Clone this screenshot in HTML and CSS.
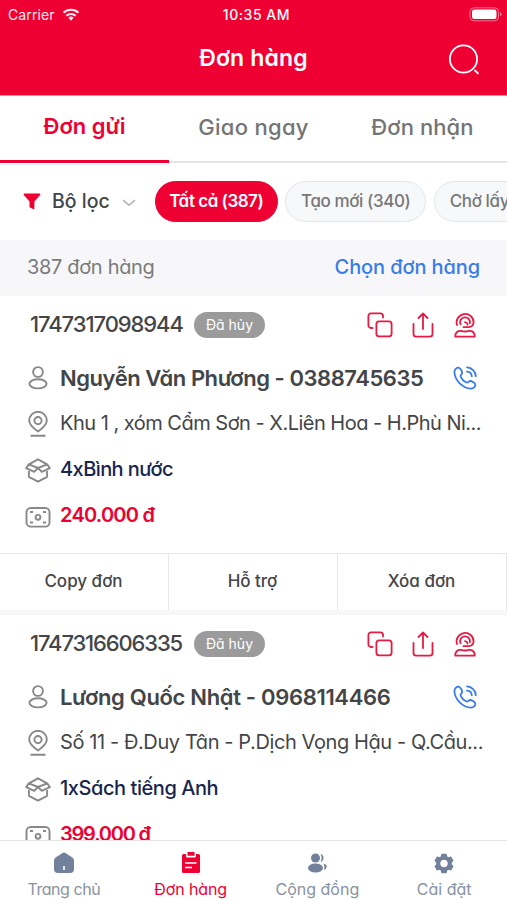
FILE: index.html
```html
<!DOCTYPE html>
<html lang="vi">
<head>
<meta charset="utf-8">
<title>Đơn hàng</title>
<link rel="stylesheet" href="styles.css">
</head>
<body>
<svg class="defs" width="0" height="0">
  <symbol id="copy" viewBox="0 0 26 26"><path d="M5.500 16H4a2.600 2.600 0 0 1-2.600-2.600V4A2.600 2.600 0 0 1 4 1.400h9.400A2.600 2.600 0 0 1 16 4v1.500"/><rect x="9.400" y="9.400" width="15.200" height="15" rx="2.600"/></symbol>
  <symbol id="share" viewBox="0 0 22 26"><path d="M1.500 12v10a2.600 2.600 0 0 0 2.600 2.600h13.800a2.600 2.600 0 0 0 2.600-2.600V12M11 17V1.500M6.500 6 11 1.500 15.500 6"/></symbol>
  <symbol id="agent" viewBox="0 0 22 26"><path d="M3 13A8.500 8.500 0 1 1 19.600 10.500Q19.200 14.800 14.500 15.200H9.500M6.600 12.300a4.900 4.900 0 1 1 9.200-1M11 10.200q2.200.3 2.600 2.300M1.200 24.600q0-5.400 4.800-5.800h1q4 1.400 8 0h1q4.800.4 4.800 5.800z"/></symbol>
  <symbol id="call" viewBox="0 0 24 24"><path d="M6 1.800C4 1 1.500 3.200 1.400 6c.3 8.300 8.300 16.400 16.600 16.600 2.800 0 5-2.400 4.200-4.400-.5-1.400-3.600-3.200-5-3.200-1.500 0-2.200 2-3.400 1.500-2.400-.9-5.200-3.700-6.200-6.200C7.200 9.100 9.200 8.300 9.200 6.900 9.200 5.400 7.500 2.400 6 1.800zM14 1.300c4.700.2 8.600 4.100 8.800 8.800M14 5.600c2.600.2 4.600 2.200 4.800 4.700"/></symbol>
  <symbol id="user" viewBox="0 0 26 26"><circle cx="13" cy="7" r="4.900"/><ellipse cx="13" cy="18.800" rx="8.600" ry="4.600"/></symbol>
  <symbol id="pin" viewBox="0 0 26 26"><path d="M13 20.500C10 18.500 4.200 14.500 4.200 9.600a8.800 8.800 0 0 1 17.600 0C21.800 14.500 16 18.500 13 20.500zM5.500 24.800h15"/><circle cx="13" cy="9.600" r="3.600"/></symbol>
  <symbol id="box" viewBox="0 0 26 26"><path d="M3.800 7.300 13 2.300l9.200 5 2.600 3.800-8 3.800L13 11l-3.800 3.900-8-3.800zM3.800 7.300 13 11l9.200-3.700M3.900 12.800v7L13 24.700l9.100-4.900v-7"/></symbol>
  <symbol id="cash" viewBox="0 0 26 26"><rect x="1.500" y="4" width="23" height="18.600" rx="4.200"/><circle cx="13" cy="13.300" r="2.400"/><path d="M5 8h3M18 8h3M5 18.500h3M18 18.500h3"/></symbol>
</svg>
<div class="app">
  <header class="header">
    <div class="status">
      <div class="carrier"><span>Carrier</span>
        <svg width="18" height="13" viewBox="0 0 18 13"><path class="wave" d="M1.500 4.700a11 11 0 0 1 15 0M4.300 7.700a7 7 0 0 1 9.400 0"/><path fill="#fff" d="M6.300 9.800a4 4 0 0 1 5.400 0L9 12.700z"/></svg>
      </div>
      <span class="time">10:35 AM</span>
      <svg class="battery" width="33" height="15" viewBox="0 0 33 15"><rect x="1" y=".8" width="28.500" height="13" rx="4" fill="none" stroke="#fff" stroke-opacity=".45"/><rect x="3" y="2.600" width="24.500" height="9.400" rx="2.300" fill="#fff"/><path d="M31 5v4.500q1.500-1 1.500-2.200T31 5" fill="#fff" opacity=".5"/></svg>
    </div>
    <div class="titlebar">
      <h1>Đơn hàng</h1>
      <svg class="search" width="32" height="32" viewBox="0 0 32 32"><circle cx="15.500" cy="15" r="13.600"/><path d="m27 26.500 3 2.800"/></svg>
    </div>
  </header>
  <nav class="tabs">
    <div class="tab active"><span class="t1">Đơn gửi</span></div>
    <div class="tab"><span class="t2">Giao ngay</span></div>
    <div class="tab"><span class="t3">Đơn nhận</span></div>
  </nav>
  <section class="filters">
    <svg class="funnel" width="18" height="17" viewBox="0 0 18 17"><path d="M1.300.5h15.400q1 .4.400 1.500L11.400 8.500v6.800q-.2 1.200-1.300.8L7 14.400q-.5-.3-.5-1V8.500L.8 2Q.2 1 1.300.500z"/></svg>
    <span class="filter-name">Bộ lọc</span>
    <svg class="chevron" width="14" height="8" viewBox="0 0 14 8"><path d="m1 1.200 6 5 6-5"/></svg>
    <div class="pill selected"><span>Tất cả (387)</span></div>
    <div class="pill new"><span>Tạo mới (340)</span></div>
    <div class="pill wait"><span>Chờ lấy</span></div>
  </section>
  <section class="summary"><span class="count">387 đơn hàng</span><span class="choose">Chọn đơn hàng</span></section>
  <main class="orders">
    <article class="order">
      <div class="row head"><span class="code code1">1747317098944</span><span class="badge">Đã hủy</span>
        <span class="tools"><svg width="26" height="26"><use href="#copy"/></svg><svg width="22" height="26"><use href="#share"/></svg><svg width="22" height="26"><use href="#agent"/></svg></span></div>
      <div class="row name"><svg class="ico"><use href="#user"/></svg><span class="n1">Nguyễn Văn Phương - 0388745635</span><svg class="call" width="24" height="24"><use href="#call"/></svg></div>
      <div class="row address"><svg class="ico"><use href="#pin"/></svg><span class="a1">Khu 1 , xóm Cẩm Sơn - X.Liên Hoa - H.Phù Ni...</span></div>
      <div class="row item"><svg class="ico"><use href="#box"/></svg><span class="i1">4xBình nước</span></div>
      <div class="row price"><svg class="ico"><use href="#cash"/></svg><span class="p1">240.000 đ</span></div>
      <div class="actions"><span>Copy đơn</span><span>Hỗ trợ</span><span>Xóa đơn</span></div>
    </article>
    <article class="order">
      <div class="row head"><span class="code code2">1747316606335</span><span class="badge">Đã hủy</span>
        <span class="tools"><svg width="26" height="26"><use href="#copy"/></svg><svg width="22" height="26"><use href="#share"/></svg><svg width="22" height="26"><use href="#agent"/></svg></span></div>
      <div class="row name"><svg class="ico"><use href="#user"/></svg><span class="n2">Lương Quốc Nhật - 0968114466</span><svg class="call" width="24" height="24"><use href="#call"/></svg></div>
      <div class="row address"><svg class="ico"><use href="#pin"/></svg><span class="a2">Số 11 - Đ.Duy Tân - P.Dịch Vọng Hậu - Q.Cầu...</span></div>
      <div class="row item"><svg class="ico"><use href="#box"/></svg><span class="i2">1xSách tiếng Anh</span></div>
      <div class="row price"><svg class="ico"><use href="#cash"/></svg><span class="p2">399.000 đ</span></div>
    </article>
  </main>
  <nav class="bottom">
    <div class="nav"><svg width="22" height="22" viewBox="0 0 22 22"><path fill="currentColor" d="M9.500 1q1.500-.8 3 0l6.800 4.600q1.700 1.200 1.700 3V17q0 4-4 4H5q-4 0-4-4V8.600q0-1.800 1.700-3z"/><path d="M11 14v4" stroke="#fff" stroke-width="1.600"/></svg><span class="b1">Trang chủ</span></div>
    <div class="nav on"><svg width="22" height="22" viewBox="0 0 22 22"><path fill="currentColor" d="M3.500 2H6v2q0 1.500 1.500 1.500h7Q16 5.500 16 4V2h2.500Q20 2 20 3.500v16q0 1.500-1.500 1.500h-15Q2 21 2 19.500v-16Q2 2 3.500 2zM7.500 0h7v3.800h-7z"/><path d="M5 11h11.500M5 15.500h7" stroke="#fff" stroke-width="1.600"/></svg><span class="b2">Đơn hàng</span></div>
    <div class="nav"><svg width="22" height="22" viewBox="0 0 22 22"><g fill="currentColor"><circle cx="9.500" cy="6" r="4.500"/><ellipse cx="9.500" cy="16" rx="7.500" ry="4.500"/><path d="M14.500 2q3 .8 3 4t-3 4q2.200-4 0-8M17.500 11.800q3.500.8 3.200 3.200-.5 2.300-2.700 3 1.200-3-.5-6.200"/></g></svg><span class="b3">Cộng đồng</span></div>
    <div class="nav"><svg width="22" height="22" viewBox="0 0 22 22"><path fill="currentColor" stroke="currentColor" stroke-width="1.200" stroke-linejoin="round" fill-rule="evenodd" d="M9 2.300h4l.8 2.600 1.500.9 2.600-.6 2 3.500-1.800 1.900v1.800l1.800 1.900-2 3.500-2.600-.6-1.500.9-.8 2.600H9l-.8-2.600-1.500-.9-2.600.6-2-3.500 1.800-1.900v-1.800L2.100 8.700l2-3.500 2.600.6 1.500-.9zM11 7.200a4.300 4.300 0 1 0 0 8.600 4.300 4.300 0 0 0 0-8.600"/></svg><span class="b4">Cài đặt</span></div>
  </nav>
</div>
</body>
</html>
```
FILE: styles.css
```css
* { box-sizing: border-box; }
body { margin: 0; background: #fff; font-family: Inter, "Noto Sans", sans-serif; font-feature-settings: "cv11"; color: #434547; }
svg { flex: none; display: block; }
.defs { position: absolute; }
.app { width: 507px; height: 900px; overflow: hidden; display: flex; flex-direction: column; white-space: nowrap; }
.header { height: 96px; flex: none; background: #ee0033; border-bottom: 1px solid #f58ca2; color: #fff; }
.status { height: 28px; display: grid; grid-template-columns: 1fr auto 1fr; align-items: center; padding: 0 5px 0 8px; }
.carrier { display: flex; align-items: center; gap: 7px; font-size: 14px; letter-spacing: .1px; opacity: .92; font-feature-settings: normal; }
.wave { fill: none; stroke: #fff; stroke-width: 2; }
.time { font-size: 14px; font-weight: 500; letter-spacing: .55px; font-feature-settings: normal; margin-left: 3px; }
.battery { justify-self: end; }
.titlebar { height: 60px; display: grid; grid-template-columns: 1fr auto 1fr; align-items: center; padding-right: 27px; }
h1 { grid-column: 2; margin: 0 0 0 27px; font-size: 23px; font-weight: 600; letter-spacing: .15px; }
.search { justify-self: end; margin-top: 4px; fill: none; stroke: #fff; stroke-width: 1.8; stroke-linecap: round; }
.tabs { height: 67px; flex: none; display: grid; grid-template-columns: 1fr 1fr 1fr; }
.tab { display: flex; align-items: center; justify-content: center; padding-bottom: 3px; border-bottom: 2px solid #e4e4e4; color: #747474; font-size: 22px; font-weight: 500; }
.tab.active { border-bottom: 3px solid #ee0033; color: #ee0033; font-weight: 600; }
.t1 { margin-top: -1px; }
.t2 { letter-spacing: .3px; }
.t3 { letter-spacing: .1px; }
.filters { height: 77px; flex: none; display: flex; align-items: center; padding-left: 23px; }
.funnel { fill: #ee0033; }
.filter-name { width: 58px; margin-left: 11px; padding-bottom: 2px; font-size: 19.500px; font-weight: 500; }
.chevron { margin: 2px 19px 0 12px; width: 14px; fill: none; stroke: #b4b4b4; stroke-width: 1.5; }
.pill { height: 41px; flex: none; border: 1px solid #e2e6ec; border-radius: 21px; background: #f7f8fa; display: flex; align-items: center; justify-content: center; color: #777; font-size: 17px; font-weight: 500; letter-spacing: -.4px; padding-bottom: 2px; }
.selected { width: 123px; background: #ee0033; border-color: #ee0033; color: #fff; font-weight: 600; letter-spacing: -.5px; }
.new { width: 141px; margin: 0 7.500px; }
.wait { width: 140px; justify-content: flex-start; padding-left: 15px; }
.summary { height: 56px; flex: none; background: #f7f7f9; display: flex; align-items: center; justify-content: space-between; padding: 0 27px 2px; font-size: 20px; color: #7b7b7b; }
.count { letter-spacing: -.33px; }
.choose { color: #397ce8; font-weight: 500; letter-spacing: -.1px; }
.orders { flex: 1; min-height: 0; overflow: hidden; }
.order { height: 314px; margin-bottom: 5px; box-shadow: 0 5px #f7f7f9; display: grid; grid-template-rows: 58px 48px 44px 47px 60px 57px; }
.row { display: flex; align-items: center; padding: 0 30px 0 24.500px; }
.head { padding: 0 31px 0 30px; }
.code { width: 153px; font-size: 22px; font-weight: 500; margin-top: -3px; }
.code1 { letter-spacing: -1.08px; }
.code2 { letter-spacing: -1.15px; }
.badge { width: 71px; height: 26px; margin-left: 11px; border-radius: 13px; background: #9b9b9b; color: #fff; font-size: 14px; display: flex; align-items: center; justify-content: center; padding-bottom: 2px; }
.tools { margin-left: auto; display: flex; gap: 20px; fill: none; stroke: #e51b45; stroke-width: 1.8; stroke-linecap: round; stroke-linejoin: round; }
.tools svg:first-child { margin-right: -1px; }
.ico { width: 26px; height: 26px; margin-right: 9.500px; fill: none; stroke: #888; stroke-width: 1.900; stroke-linejoin: round; }
.name { font-size: 22px; font-weight: 600; }
.n1 { letter-spacing: -.46px; margin-top: -1px; }
.n2 { letter-spacing: -.33px; margin-top: -1px; }
.call { margin-left: auto; fill: none; stroke: #397ce8; stroke-width: 1.8; stroke-linecap: round; stroke-linejoin: round; }
.address { font-size: 20px; padding-right: 0; padding-bottom: 1px; }
.address span { margin-top: -2px; }
.a1 { letter-spacing: -.51px; }
.a2 { letter-spacing: -.4px; }
.item { color: #16264f; font-size: 20px; font-weight: 500; }
.item span { margin-top: -1px; }
.i1 { letter-spacing: -.57px; }
.i2 { letter-spacing: -.44px; }
.price { padding-bottom: 13px; color: #ee0033; font-size: 20px; font-weight: 600; }
.p1 { letter-spacing: -.75px; margin-top: -3px; }
.p2 { letter-spacing: -1.2px; margin-top: -3px; }
.actions { display: grid; grid-template-columns: 169px 169px 169px; border-top: 1px solid #e3e7f0; font-size: 17px; font-weight: 500; }
.actions span { display: flex; align-items: center; justify-content: center; border-right: 1px solid #e3e7f0; padding: 0 1px 3px 0; }
.bottom { height: 60px; flex: none; border-top: 1px solid #e6e6e6; background: #fff; display: grid; grid-template-columns: repeat(4, 1fr); color: #71809b; font-size: 16px; }
.nav { display: flex; flex-direction: column; align-items: center; padding: 11px 0 0 1px; gap: 5px; }
.nav span { line-height: 20px; color: #8892a2; }
.nav.on, .nav.on span { color: #ee0033; }
.b1 { letter-spacing: -.45px; }
.b2 { letter-spacing: -.1px; }
```
